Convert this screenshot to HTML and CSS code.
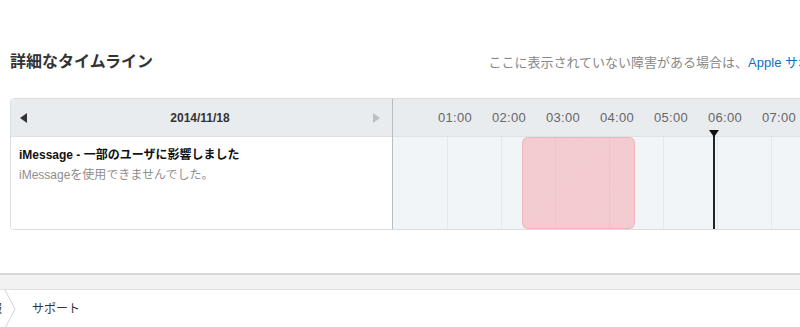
FILE: index.html
```html
<!DOCTYPE html>
<html>
<head>
    <meta charset="utf-8">
    <title>詳細なタイムライン</title>
    <link rel="stylesheet" href="styles.css">
</head>
<body>
    <div class="page">
        <div class="head">
            <h2>詳細なタイムライン</h2>
            <p class="note">ここに表示されていない障害がある場合は、<a href="javascript:;">Apple サポート</a>にお問い合わせください。</p>
        </div>

        <div class="timeline">
            <div class="side">
                <div class="side-head">
                    <a class="prev" href="javascript:;"></a>
                    <span class="date">2014/11/18</span>
                    <a class="next" href="javascript:;"></a>
                </div>
                <div class="event">
                    <strong>iMessage - 一部のユーザに影響しました</strong>
                    <p>iMessageを使用できませんでした。</p>
                </div>
            </div>
            <div class="main">
                <div class="hours">
                    <span>01:00</span><span>02:00</span><span>03:00</span><span>04:00</span>
                    <span>05:00</span><span>06:00</span><span>07:00</span><span>08:00</span>
                    <span>09:00</span><span>10:00</span>
                </div>
                <div class="grid">
                    <i></i><i></i><i></i><i></i><i></i><i></i><i></i><i></i><i></i><i></i><i></i>
                    <div class="outage"></div>
                </div>
                <div class="now"></div>
            </div>
        </div>
    </div>

    <div class="bar"></div>
    <div class="crumbs">
        <span class="crumb first">報</span>
        <svg class="chev" width="14" height="38" viewBox="0 0 14 38"><polyline points="1,0 11,19 1,38" fill="none" stroke="#d4d4d4" stroke-width="1"/></svg>
        <span class="crumb">サポート</span>
    </div>
</body>
</html>
```

FILE: styles.css
```css
html,
body {
    overflow: hidden;
}

body,
div,
h2,
p {
    margin: 0;
    padding: 0;
}

body {
    color: #333;
    background: #fff;
    font: 12px/1.5 "Liberation Sans", "Noto Sans CJK JP", sans-serif;
}

.page {
    width: 983px;
    padding: 50px 0 0 10px;
}

.head {
    display: flex;
    align-items: baseline;
}

.head h2 {
    font-size: 16px;
    line-height: 24px;
    font-weight: bold;
    color: #333;
}

.note {
    margin-left: auto;
    font-size: 13px;
    color: #888;
    white-space: nowrap;
}

.note a {
    color: #0a70c8;
    text-decoration: none;
}

.timeline {
    display: flex;
    margin-top: 24px;
    border: 1px solid #dadde0;
    border-radius: 4px 0 0 4px;
    overflow: hidden;
}

.side {
    width: 381px;
    flex: none;
    background: #fff;
}

.side-head {
    display: flex;
    align-items: center;
    justify-content: space-between;
    height: 37px;
    padding: 0 12px 0 9px;
    background: #e9ecef;
    border-bottom: 1px solid #dfe2e5;
}

.prev,
.next {
    width: 0;
    height: 0;
    border-top: 5px solid transparent;
    border-bottom: 5px solid transparent;
}

.prev {
    border-right: 7px solid #333;
}

.next {
    border-left: 7px solid #bcc0c4;
}

.date {
    font-weight: bold;
    font-size: 12px;
    color: #333;
}

.event {
    box-sizing: border-box;
    height: 92px;
    padding: 8px 8px 0 8px;
}

.event strong {
    display: block;
    font-size: 12px;
    line-height: 20px;
    color: #111;
}

.event p {
    font-size: 12px;
    line-height: 20px;
    color: #8d8d8d;
}

.main {
    position: relative;
    flex: 1;
    border-left: 1px solid #b9bdc1;
    box-shadow: inset 1px 0 1px #d4d8dc;
}

.hours {
    display: flex;
    height: 37px;
    padding-left: 35px;
    background: #e9ecef;
    border-bottom: 1px solid #dfe2e5;
    align-items: center;
    white-space: nowrap;
}

.hours span {
    width: 54px;
    flex: none;
    text-align: center;
    font-size: 13px;
    color: #666;
    letter-spacing: 0.3px;
}

.grid {
    position: relative;
    display: flex;
    height: 92px;
    padding-left: 1px;
    background: #f1f5f8;
}

.grid i {
    width: 54px;
    flex: none;
    box-sizing: border-box;
    border-right: 1px solid #e3e8ec;
}

.outage {
    position: absolute;
    left: 129px;
    top: 0;
    width: 113px;
    height: 92px;
    box-sizing: border-box;
    border: 1px solid rgba(232, 140, 150, 0.35);
    border-radius: 6px;
    background: rgba(245, 150, 160, 0.45) repeating-linear-gradient(135deg, rgba(255, 255, 255, 0.04) 0 1px, transparent 1px 3px);
}

.now {
    position: absolute;
    left: 320px;
    top: 31px;
    bottom: 0;
    width: 2px;
    background: #222;
}

.now:before {
    content: "";
    position: absolute;
    left: -4px;
    top: 0;
    border-left: 5px solid transparent;
    border-right: 5px solid transparent;
    border-top: 7px solid #111;
}

.bar {
    height: 14px;
    margin-top: 43px;
    background: #f2f2f2;
    border-top: 2px solid #d6d6d6;
    border-bottom: 1px solid #e2e2e2;
}

.crumbs {
    display: flex;
    align-items: center;
    height: 38px;
}

.crumb {
    font-size: 12px;
    color: #333;
}

.crumb.first {
    margin-left: -10px;
}

.chev {
    margin: 0 14px 0 2px;
}
```
